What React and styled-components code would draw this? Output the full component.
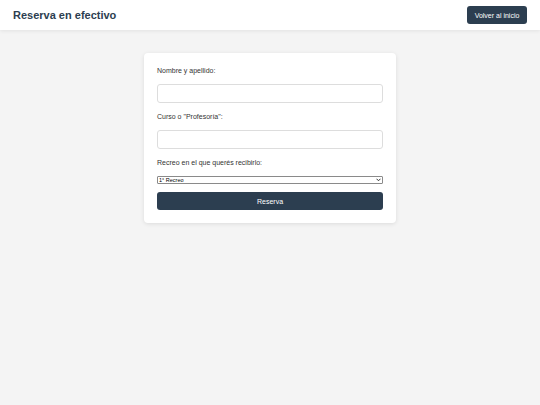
import React from "react";
import styled, { createGlobalStyle } from "styled-components";

const GlobalStyle = createGlobalStyle`
  html, body {
    margin: 0;
    padding: 0;
    background: #f4f4f4;
    font-family: "Liberation Sans", Arial, sans-serif;
  }
`;

const Page = styled.div`
  min-height: 405px;
  background: #f4f4f4;
`;

const Header = styled.header`
  height: 30px;
  background: #fff;
  display: flex;
  align-items: center;
  justify-content: space-between;
  padding: 0 13px;
  box-shadow: 0 1px 4px rgba(0, 0, 0, 0.08);
`;

const Title = styled.h1`
  margin: 0;
  font-size: 11px;
  font-weight: bold;
  color: #2c3e50;
`;

const DarkButton = styled.button`
  background: #2c3e50;
  color: #fff;
  border: none;
  border-radius: 3px;
  font-family: inherit;
  font-size: 7px;
  cursor: pointer;
  height: 18px;
  width: ${({ $full }) => ($full ? "100%" : "60px")};
  padding: 0;
`;

const Main = styled.main`
  display: flex;
  justify-content: center;
  padding-top: 23px;
`;

const Card = styled.form`
  width: 252px;
  box-sizing: border-box;
  background: #fff;
  border-radius: 4px;
  box-shadow: 0 1px 4px rgba(0, 0, 0, 0.1);
  padding: 13px;
  display: flex;
  flex-direction: column;
`;

const Label = styled.label`
  font-size: 7px;
  line-height: 10px;
  color: #333;
  margin-bottom: 8px;
`;

const Input = styled.input`
  box-sizing: border-box;
  width: 100%;
  height: 19px;
  border: 1px solid #ddd;
  border-radius: 3px;
  margin: 0 0 9px;
  padding: 0 4px;
  font-size: 8px;
`;

const SelectWrap = styled.div`
  position: relative;
  margin: 0 0 8px;
`;

const Select = styled.select`
  display: block;
  box-sizing: border-box;
  width: 100%;
  height: 8px;
  font-size: 5.5px;
  padding: 0 1px;
  margin: 0;
  border: 1px solid #8a8a8a;
  border-radius: 1px;
  background: #fff;
  color: #000;
  font-family: inherit;
  appearance: none;
  -webkit-appearance: none;
`;

const Chevron = styled.svg`
  position: absolute;
  right: 2px;
  top: 2px;
  width: 5px;
  height: 4px;
  pointer-events: none;
`;

export default function App() {
  return (
    <Page>
      <GlobalStyle />
      <Header>
        <Title>Reserva en efectivo</Title>
        <DarkButton type="button">Volver al inicio</DarkButton>
      </Header>
      <Main>
        <Card onSubmit={(e) => e.preventDefault()}>
          <Label>Nombre y apellido:</Label>
          <Input type="text" />
          <Label>Curso o "Profesoría":</Label>
          <Input type="text" />
          <Label>Recreo en el que querés recibirlo:</Label>
          <SelectWrap>
            <Select defaultValue="1">
              <option value="1">1° Recreo</option>
              <option value="2">2° Recreo</option>
              <option value="3">3° Recreo</option>
            </Select>
            <Chevron viewBox="0 0 10 8">
              <path d="M1 1.5 L5 5.5 L9 1.5" fill="none" stroke="#333" strokeWidth="2" />
            </Chevron>
          </SelectWrap>
          <DarkButton type="submit" $full>
            Reserva
          </DarkButton>
        </Card>
      </Main>
    </Page>
  );
}
